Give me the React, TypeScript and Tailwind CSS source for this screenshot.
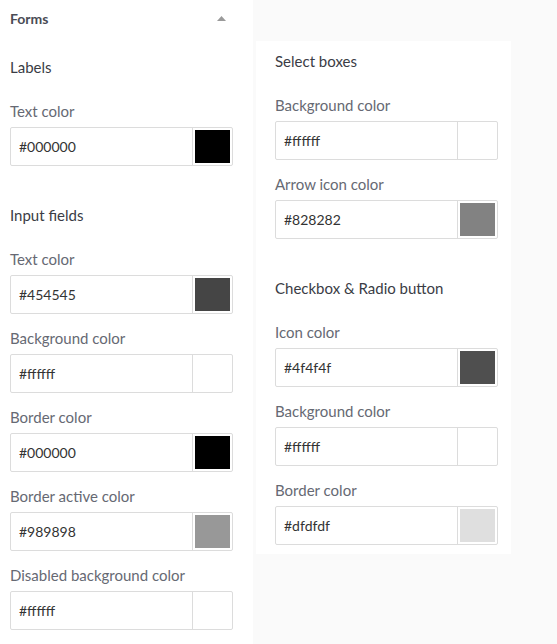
import React from "react";

const font = { fontFamily: "Lato, 'Open Sans', sans-serif" };

function Field({ label, value, color, last = false }: { label: string; value: string; color: string; last?: boolean }) {
  return (
    <div className={last ? "" : "mb-[12px]"}>
      <div className="h-[24px] leading-[24px] text-[15px] text-[#666973] mb-[4px]">{label}</div>
      <div className="flex h-[39px] w-[223px] rounded-[2px] border border-[#dcdcdc] bg-white">
        <div className="flex-1 flex items-center pl-[8px] text-[14px] text-[#333]">{value}</div>
        <div className="w-[40px] border-l border-[#dcdcdc] p-[2px]">
          <div className="h-full w-full" style={{ background: color }} />
        </div>
      </div>
    </div>
  );
}

function Heading({ children, className = "" }: { children: React.ReactNode; className?: string }) {
  return (
    <div className={"h-[24px] leading-[24px] text-[15px] text-[#3a3c45] " + className}>{children}</div>
  );
}

export default function App() {
  return (
    <div className="flex h-[644px] w-[557px] overflow-hidden bg-[#fafafa]" style={font}>
      <div className="w-[253px] bg-white px-[10px]">
        <div className="flex h-[36px] items-center justify-between pr-[17px]">
          <span className="text-[14px] font-bold text-[#4a4c55]">Forms</span>
          <svg width="9" height="5" viewBox="0 0 9 5">
            <path d="M0 5 L4.5 0 L9 5 Z" fill="#9a9a9a" />
          </svg>
        </div>
        <Heading className="mt-[19px] mb-[20px]">Labels</Heading>
        <Field label="Text color" value="#000000" color="#000000" />
        <Heading className="mt-[37px] mb-[20px]">Input fields</Heading>
        <Field label="Text color" value="#454545" color="#454545" />
        <Field label="Background color" value="#ffffff" color="#ffffff" />
        <Field label="Border color" value="#000000" color="#000000" />
        <Field label="Border active color" value="#989898" color="#989898" />
        <Field label="Disabled background color" value="#ffffff" color="#ffffff" />
      </div>
      <div className="flex-1 pt-[41px] pl-[3px]">
        <div className="w-[255px] bg-white pl-[19px] pt-[8px] pb-[9px]">
          <Heading className="mb-[20px]">Select boxes</Heading>
          <Field label="Background color" value="#ffffff" color="#ffffff" />
          <Field label="Arrow icon color" value="#828282" color="#828282" />
          <Heading className="mt-[37px] mb-[20px]">Checkbox &amp; Radio button</Heading>
          <Field label="Icon color" value="#4f4f4f" color="#4f4f4f" />
          <Field label="Background color" value="#ffffff" color="#ffffff" />
          <Field label="Border color" value="#dfdfdf" color="#dfdfdf" last />
        </div>
      </div>
    </div>
  );
}
